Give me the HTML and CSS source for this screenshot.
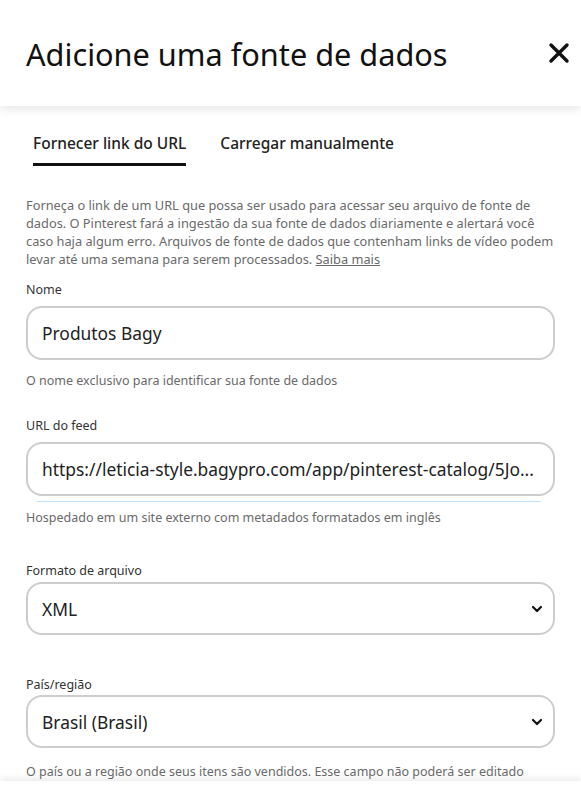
FILE: index.html
```html
<!DOCTYPE html>
<html lang="pt-br">

<head>
  <meta charset="UTF-8" />
  <meta name="viewport" content="width=device-width, initial-scale=1" />
  <title>Adicione uma fonte de dados</title>
  <link rel="stylesheet" href="styles.css">
</head>

<body>

  <header class="topo">
    <h1>Adicione uma fonte de dados</h1>
    <button class="fechar" aria-label="Fechar">
      <svg width="22" height="22" viewBox="0 0 22 22">
        <path d="M3 3 L19 19 M19 3 L3 19" stroke="#111" stroke-width="3.4" stroke-linecap="round" />
      </svg>
    </button>
  </header>

  <main class="conteudo">
    <!-- Abas -->
    <nav class="abas">
      <span class="aba ativa">Fornecer link do URL</span>
      <span class="aba">Carregar manualmente</span>
    </nav>

    <p class="descricao">
      Forneça o link de um URL que possa ser usado para acessar seu arquivo de fonte de
      dados. O Pinterest fará a ingestão da sua fonte de dados diariamente e alertará você
      caso haja algum erro. Arquivos de fonte de dados que contenham links de vídeo podem
      levar até uma semana para serem processados. <a href="#">Saiba mais</a>
    </p>

    <div class="campo campo-nome">
      <label for="nome">Nome</label>
      <input type="text" id="nome" value="Produtos Bagy" />
      <p class="ajuda">O nome exclusivo para identificar sua fonte de dados</p>
    </div>

    <div class="campo campo-url">
      <label for="url">URL do feed</label>
      <div class="caixa" id="url">https://leticia-style.bagypro.com/app/pinterest-catalog/5Jo...</div>
      <div class="progresso"></div>
      <p class="ajuda">Hospedado em um site externo com metadados formatados em inglês</p>
    </div>

    <div class="campo campo-formato">
      <label for="formato">Formato de arquivo</label>
      <div class="caixa seletor" id="formato">
        <span>XML</span>
        <svg width="12" height="12" viewBox="0 0 12 12"><path d="M2 4 L6 8 L10 4" fill="none" stroke="#111" stroke-width="2.2" stroke-linecap="round" stroke-linejoin="round" /></svg>
      </div>
    </div>

    <div class="campo campo-pais">
      <label for="pais">País/região</label>
      <div class="caixa seletor" id="pais">
        <span>Brasil (Brasil)</span>
        <svg width="12" height="12" viewBox="0 0 12 12"><path d="M2 4 L6 8 L10 4" fill="none" stroke="#111" stroke-width="2.2" stroke-linecap="round" stroke-linejoin="round" /></svg>
      </div>
      <p class="ajuda">O país ou a região onde seus itens são vendidos. Esse campo não poderá ser editado</p>
    </div>
  </main>

  <footer class="rodape"></footer>

</body>

</html>
```

FILE: styles.css
```css
* {
  margin: 0;
  padding: 0;
  box-sizing: border-box;
}

html,
body {
  font-family: 'Noto Sans', 'Open Sans', sans-serif;
  background: #fff;
  color: #111;
  height: 795px;
  overflow: hidden;
}

body {
  display: flex;
  flex-direction: column;
}

.topo {
  height: 106px;
  flex-shrink: 0;
  padding: 0 2px 0 26px;
  display: flex;
  align-items: center;
  justify-content: space-between;
  box-shadow: 0 3px 10px rgba(0, 0, 0, 0.1);
  position: relative;
  z-index: 1;
}

.topo h1 {
  font-size: 30.7px;
  font-weight: 400;
  padding-top: 2px;
}

.fechar {
  width: 40px;
  height: 40px;
  border: none;
  background: none;
  display: flex;
  align-items: center;
  justify-content: center;
}

.conteudo {
  flex: 1;
  padding: 26px 26px 0;
  overflow: hidden;
}

/* Abas */
.abas {
  display: flex;
  gap: 34px;
  padding-left: 7px;
}

.aba {
  padding-bottom: 9px;
  font-size: 15.5px;
  font-weight: 500;
  color: #222;
  border-bottom: 3px solid transparent;
}

.aba.ativa {
  border-bottom-color: #111;
}

.descricao {
  margin-top: 30px;
  font-size: 12.8px;
  line-height: 18px;
  color: #6a6a6a;
}

.descricao a {
  color: #6a6a6a;
}

label {
  display: block;
  font-size: 12.5px;
  color: #333;
  margin-bottom: 8px;
}

input,
.caixa {
  width: 100%;
  height: 54px;
  border: 2px solid #cdcdcd;
  border-radius: 16px;
  padding: 0 14px;
  font-family: inherit;
  font-size: 17.4px;
  color: #222;
  background: #fff;
  outline: none;
  display: flex;
  align-items: center;
  white-space: nowrap;
  overflow: hidden;
}

.seletor {
  justify-content: space-between;
  height: 53px;
  padding-right: 10px;
}

.progresso {
  height: 1px;
  margin: 5px 14px 0 11px;
  background: #bfe0fb;
}

.ajuda {
  margin-top: 12px;
  font-size: 12.5px;
  color: #6a6a6a;
}

.campo-nome {
  margin-top: 13px;
}

.campo-url {
  margin-top: 28px;
}

.campo-url .ajuda {
  margin-top: 7px;
}

.campo-formato {
  margin-top: 36px;
}

.campo-formato label {
  margin-bottom: 3px;
}

.campo-pais {
  margin-top: 41px;
}

.campo-pais label {
  margin-bottom: 2px;
}

.campo-pais .ajuda {
  margin-top: 15px;
}

.rodape {
  height: 14px;
  flex-shrink: 0;
  background: #fff;
  box-shadow: 0 -3px 6px rgba(0, 0, 0, 0.08);
  position: relative;
}
```
